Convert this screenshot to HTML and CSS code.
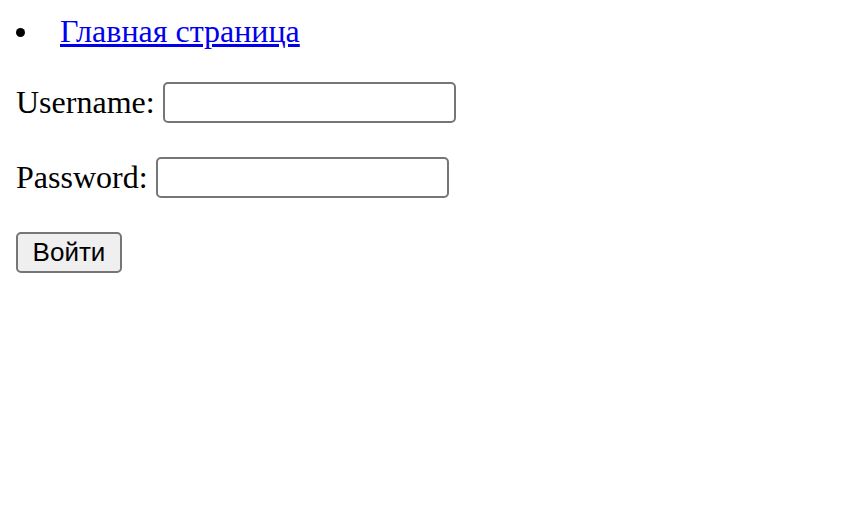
FILE: index.html
```html
<!DOCTYPE html>
<html lang="ru">
<head>
<meta charset="utf-8">
<title>Вход</title>
<link rel="stylesheet" href="styles.css">
</head>
<body>
<ul class="nav">
  <li class="nav-item"><a href="#">Главная страница</a></li>
</ul>
<form class="login">
  <p class="row"><label for="u">Username:</label> <input id="u" type="text" class="field"></p>
  <p class="row"><label for="p">Password:</label> <input id="p" type="password" class="field"></p>
  <p class="row"><button type="submit" class="btn">Войти</button></p>
</form>
</body>
</html>
```
FILE: styles.css
```css
html, body {
  margin: 0;
  background: #fff;
}
body {
  padding: 13px 16px;
  font-family: "Liberation Serif", "Times New Roman", serif;
  font-size: 32px;
  color: #000;
}
.nav {
  margin: 0;
  padding: 0;
  list-style: none;
}
.nav-item {
  display: flex;
  align-items: center;
}
.nav-item::before {
  content: "";
  width: 9px;
  height: 9px;
  border-radius: 50%;
  background: #000;
  margin: 0 35px 0 0;
  position: relative;
  top: 1px;
}
.nav a {
  color: #0000ee;
}
.login {
  margin: 0;
}
.row {
  margin: 34px 0 0 0;
  display: flex;
  align-items: center;
  gap: 8px;
  line-height: 41px;
}
.row:first-child {
  margin-top: 32px;
}
.field {
  box-sizing: border-box;
  width: 293px;
  height: 41px;
  border: 2px solid #767676;
  border-radius: 5px;
  background: #fff;
  margin: 0;
  padding: 0 4px;
  font-size: 24px;
}
.btn {
  box-sizing: border-box;
  height: 41px;
  width: 106px;
  padding: 0;
  border: 2px solid #767676;
  border-radius: 5px;
  background: #efefef;
  font-family: "Liberation Sans", Arial, sans-serif;
  font-size: 26px;
  color: #000;
}
```
